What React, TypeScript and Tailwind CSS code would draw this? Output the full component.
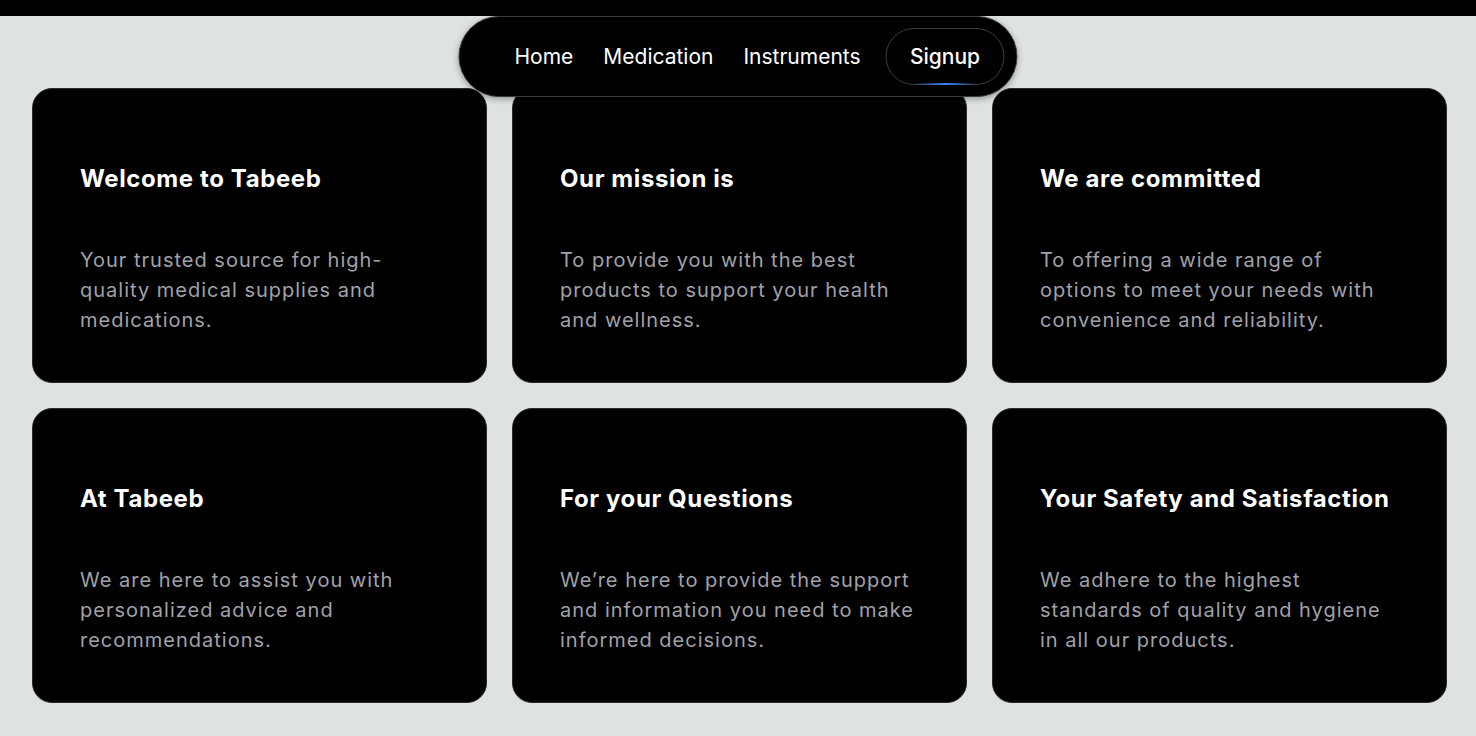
const cards = [
  {
    title: "Welcome to Tabeeb",
    body: "Your trusted source for high-quality medical supplies and medications.",
  },
  {
    title: "Our mission is",
    body: "To provide you with the best products to support your health and wellness.",
  },
  {
    title: "We are committed",
    body: "To offering a wide range of options to meet your needs with convenience and reliability.",
  },
  {
    title: "At Tabeeb",
    body: "We are here to assist you with personalized advice and recommendations.",
  },
  {
    title: "For your Questions",
    body: "We’re here to provide the support and information you need to make informed decisions.",
  },
  {
    title: "Your Safety and Satisfaction",
    body: "We adhere to the highest standards of quality and hygiene in all our products.",
  },
];

function Navbar() {
  return (
    <nav className="absolute left-1/2 top-4 -translate-x-1/2 z-10 flex items-center h-[81px] w-fit pl-[55px] pr-[12px] rounded-full bg-black border border-[#3a3a3a] shadow-[0_2px_6px_rgba(0,0,0,0.35)] font-['Inter',sans-serif] text-[21px] text-white whitespace-nowrap">
      <a className="mr-[30px]">Home</a>
      <a className="mr-[30px]">Medication</a>
      <a className="mr-[25px]">Instruments</a>
      <a className="relative flex items-center justify-center w-[119px] h-[57px] rounded-full border border-[#3c3c3c] font-medium">
        Signup
        <span className="absolute -bottom-px left-1/2 -translate-x-1/2 w-[64px] h-[2px] rounded-full bg-gradient-to-r from-transparent via-[#3b82f6] to-transparent"></span>
      </a>
    </nav>
  );
}

function Card({ title, body }: { title: string; body: string }) {
  return (
    <div className="h-[295px] rounded-[20px] bg-black border border-[#2a2a2a] pt-[74px] px-[47px] font-['Inter',sans-serif]">
      <h2 className="text-[24px] leading-[32px] font-bold tracking-[0.6px] text-white">{title}</h2>
      <p className="mt-[50px] text-[20px] leading-[30px] tracking-[1px] text-[#a1a1aa]">{body}</p>
    </div>
  );
}

export default function App() {
  return (
    <div className="relative min-h-[736px] bg-[#dfe2e3]">
      <div className="h-4 bg-black"></div>
      <Navbar />
      <main className="grid grid-cols-[repeat(3,455px)] gap-[25px] px-8 pt-[72px] pb-8">
        {cards.map((card) => (
          <Card key={card.title} title={card.title} body={card.body} />
        ))}
      </main>
    </div>
  );
}
